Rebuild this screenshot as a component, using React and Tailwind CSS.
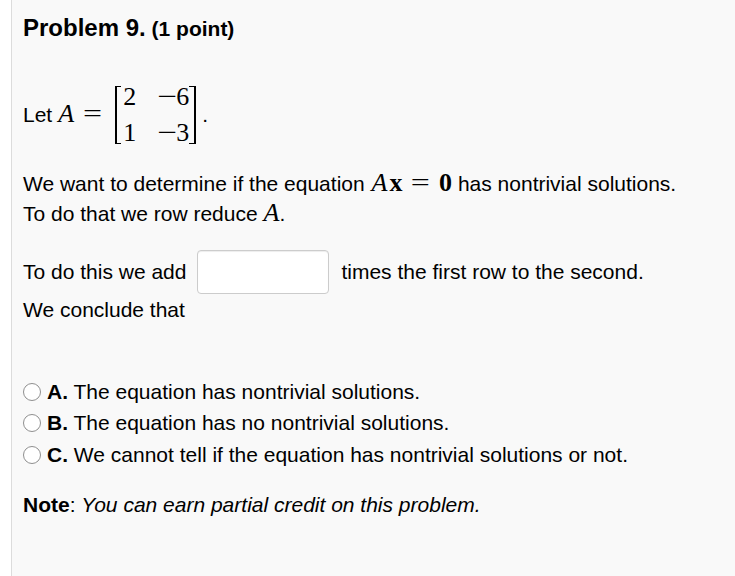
const Radio = ({ letter, children }) => (
  <li className="flex h-[31.5px] items-center">
    <span className="h-[18px] w-[18px] shrink-0 rounded-full border border-[#8f8f8f] bg-white" />
    <span className="ml-[6px]">
      <b>{letter}.</b> {children}
    </span>
  </li>
);

export default function App() {
  return (
    <div className="min-h-[576px] bg-white pl-[11px] font-['Liberation_Sans',Arial,sans-serif] text-black">
      <div className="min-h-[576px] border-l border-[#dcdcdc] bg-[#f9f9f9] pl-[11px] pt-[13px] text-[21px] leading-[30px]">
        <h3 className="font-bold">
          <span className="text-[24px]">Problem 9.</span> (1 point)
        </h3>

        <div className="mt-[42px] flex h-[58px] items-center">
          <span>
            Let
            <span className="ml-[6px] inline-block w-[19px] font-['Liberation_Serif',serif] text-[26px] leading-none italic">A</span>
            <span className="ml-[6px] inline-block w-[19px] scale-x-[1.3] text-center font-['Liberation_Serif',serif] text-[26px] leading-none">=</span>
          </span>
          <div className="ml-[13px] flex h-[58px]">
            <span className="w-[6px] border-y border-l-2 border-black" />
            <div className="grid grid-cols-[13px_33px] content-between gap-x-[20px] pl-[2px] font-['Liberation_Serif',serif] text-[26px] leading-[22px] whitespace-nowrap">
              <span>2</span>
              <span className="text-right">
                <span className="mx-[2px] inline-block scale-x-[1.35]">−</span>6
              </span>
              <span>1</span>
              <span className="text-right">
                <span className="mx-[2px] inline-block scale-x-[1.35]">−</span>3
              </span>
            </div>
            <span className="w-[7px] border-y border-r-2 border-black" />
          </div>
          <span className="ml-[6px]">.</span>
        </div>

        <p className="mt-[25px]">
          We want to determine if the equation{" "}
          <span className="ml-[1px] font-['Liberation_Serif',serif] text-[26px] leading-none italic">A</span>
          <span className="ml-[2px] font-['Liberation_Serif',serif] text-[26px] leading-none font-bold">x</span>
          <span className="mx-[11px] inline-block scale-x-[1.3] font-['Liberation_Serif',serif] text-[26px] leading-none">=</span>
          <span className="font-['Liberation_Serif',serif] text-[26px] leading-none font-bold">0</span> has nontrivial solutions.
          <br />
          To do that we row reduce{" "}
          <span className="font-['Liberation_Serif',serif] text-[26px] leading-none italic">A</span>.
        </p>

        <div className="mt-[21px] flex items-center">
          <span>To do this we add</span>
          <input
            type="text"
            className="ml-[11px] h-[44px] w-[132px] rounded-[4px] border border-[#cccccc] bg-white shadow-[inset_0_1px_1px_rgba(0,0,0,0.075)] outline-none"
          />
          <span className="ml-[12px]">times the first row to the second.</span>
        </div>

        <p className="mt-px">We conclude that</p>

        <ul className="mt-[51px]">
          <Radio letter="A">The equation has nontrivial solutions.</Radio>
          <Radio letter="B">The equation has no nontrivial solutions.</Radio>
          <Radio letter="C">We cannot tell if the equation has nontrivial solutions or not.</Radio>
        </ul>

        <p className="mt-[19.5px]">
          <b>Note</b>: <i>You can earn partial credit on this problem.</i>
        </p>
      </div>
    </div>
  );
}
